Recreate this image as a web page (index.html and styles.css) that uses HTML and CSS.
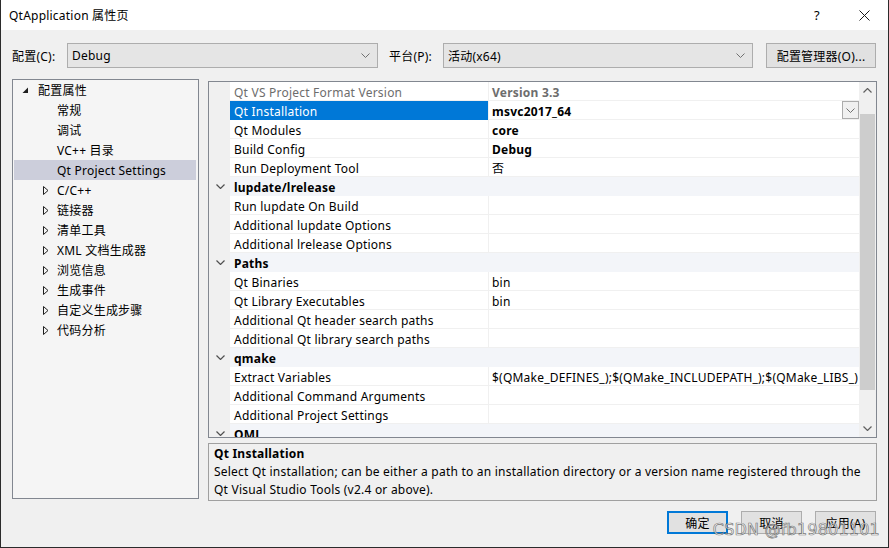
FILE: index.html
```html
<!DOCTYPE html>
<html lang="zh-CN">
<head>
<meta charset="utf-8">
<title>QtApplication 属性页</title>
<link rel="stylesheet" href="styles.css">
</head>
<body>
<div class="window">
  <div class="titlebar">
    <span class="title">QtApplication 属性页</span>
    <span class="tb-help">?</span>
    <span class="tb-close"><svg width="11" height="11" viewBox="0 0 11 11"><path d="M0.5 0.5 L10.5 10.5 M10.5 0.5 L0.5 10.5" stroke="#1a1a1a" stroke-width="1" fill="none"/></svg></span>
  </div>
  <div class="content">
    <div class="config-row">
      <span class="lbl lbl-config">配置(C):</span>
      <div class="combo combo-config"><span>Debug</span><svg class="chev" width="9" height="5" viewBox="0 0 9 5"><path d="M0.5 0.5 L4.5 4.5 L8.5 0.5" stroke="#707070" fill="none"/></svg></div>
      <span class="lbl lbl-platform">平台(P):</span>
      <div class="combo combo-platform"><span>活动(x64)</span><svg class="chev" width="9" height="5" viewBox="0 0 9 5"><path d="M0.5 0.5 L4.5 4.5 L8.5 0.5" stroke="#707070" fill="none"/></svg></div>
      <button class="btn btn-manager">配置管理器(O)...</button>
    </div>
    <div class="main-row">
      <div class="tree">
        <div class="tree-row lvl0"><span class="arrow"><svg width="7" height="7" viewBox="0 0 7 7"><polygon points="6,0.5 6,6 0.5,6" fill="#1e1e1e"/></svg></span><span>配置属性</span></div>
        <div class="tree-row leaf">常规</div>
        <div class="tree-row leaf">调试</div>
        <div class="tree-row leaf">VC++ 目录</div>
        <div class="tree-row leaf selected">Qt Project Settings</div>
        <div class="tree-row lvl1"><span class="arrow"><svg width="6" height="9" viewBox="0 0 6 9"><polygon points="0.5,0.5 5,4.5 0.5,8.5" fill="none" stroke="#1e1e1e"/></svg></span><span>C/C++</span></div>
        <div class="tree-row lvl1"><span class="arrow"><svg width="6" height="9" viewBox="0 0 6 9"><polygon points="0.5,0.5 5,4.5 0.5,8.5" fill="none" stroke="#1e1e1e"/></svg></span><span>链接器</span></div>
        <div class="tree-row lvl1"><span class="arrow"><svg width="6" height="9" viewBox="0 0 6 9"><polygon points="0.5,0.5 5,4.5 0.5,8.5" fill="none" stroke="#1e1e1e"/></svg></span><span>清单工具</span></div>
        <div class="tree-row lvl1"><span class="arrow"><svg width="6" height="9" viewBox="0 0 6 9"><polygon points="0.5,0.5 5,4.5 0.5,8.5" fill="none" stroke="#1e1e1e"/></svg></span><span>XML 文档生成器</span></div>
        <div class="tree-row lvl1"><span class="arrow"><svg width="6" height="9" viewBox="0 0 6 9"><polygon points="0.5,0.5 5,4.5 0.5,8.5" fill="none" stroke="#1e1e1e"/></svg></span><span>浏览信息</span></div>
        <div class="tree-row lvl1"><span class="arrow"><svg width="6" height="9" viewBox="0 0 6 9"><polygon points="0.5,0.5 5,4.5 0.5,8.5" fill="none" stroke="#1e1e1e"/></svg></span><span>生成事件</span></div>
        <div class="tree-row lvl1"><span class="arrow"><svg width="6" height="9" viewBox="0 0 6 9"><polygon points="0.5,0.5 5,4.5 0.5,8.5" fill="none" stroke="#1e1e1e"/></svg></span><span>自定义生成步骤</span></div>
        <div class="tree-row lvl1"><span class="arrow"><svg width="6" height="9" viewBox="0 0 6 9"><polygon points="0.5,0.5 5,4.5 0.5,8.5" fill="none" stroke="#1e1e1e"/></svg></span><span>代码分析</span></div>
      </div>
      <div class="right-col">
        <div class="grid">
          <div class="rows">
            <div class="prow readonly"><span class="gut"></span><span class="pname">Qt VS Project Format Version</span><span class="pval bold">Version 3.3</span></div>
            <div class="prow"><span class="gut"></span><span class="pname sel">Qt Installation</span><span class="pval bold">msvc2017_64<span class="dd"><svg width="9" height="5" viewBox="0 0 9 5"><path d="M0.5 0.5 L4.5 4.5 L8.5 0.5" stroke="#707070" fill="none"/></svg></span></span></div>
            <div class="prow"><span class="gut"></span><span class="pname">Qt Modules</span><span class="pval bold">core</span></div>
            <div class="prow"><span class="gut"></span><span class="pname">Build Config</span><span class="pval bold">Debug</span></div>
            <div class="prow"><span class="gut"></span><span class="pname">Run Deployment Tool</span><span class="pval">否</span></div>
            <div class="prow cat"><span class="gut"><svg width="9" height="5" viewBox="0 0 9 5"><path d="M0.5 0.5 L4.5 4.5 L8.5 0.5" stroke="#505050" stroke-width="1.2" fill="none"/></svg></span><span class="cname">lupdate/lrelease</span></div>
            <div class="prow"><span class="gut"></span><span class="pname">Run lupdate On Build</span><span class="pval"></span></div>
            <div class="prow"><span class="gut"></span><span class="pname">Additional lupdate Options</span><span class="pval"></span></div>
            <div class="prow"><span class="gut"></span><span class="pname">Additional lrelease Options</span><span class="pval"></span></div>
            <div class="prow cat"><span class="gut"><svg width="9" height="5" viewBox="0 0 9 5"><path d="M0.5 0.5 L4.5 4.5 L8.5 0.5" stroke="#505050" stroke-width="1.2" fill="none"/></svg></span><span class="cname">Paths</span></div>
            <div class="prow"><span class="gut"></span><span class="pname">Qt Binaries</span><span class="pval">bin</span></div>
            <div class="prow"><span class="gut"></span><span class="pname">Qt Library Executables</span><span class="pval">bin</span></div>
            <div class="prow"><span class="gut"></span><span class="pname">Additional Qt header search paths</span><span class="pval"></span></div>
            <div class="prow"><span class="gut"></span><span class="pname">Additional Qt library search paths</span><span class="pval"></span></div>
            <div class="prow cat"><span class="gut"><svg width="9" height="5" viewBox="0 0 9 5"><path d="M0.5 0.5 L4.5 4.5 L8.5 0.5" stroke="#505050" stroke-width="1.2" fill="none"/></svg></span><span class="cname">qmake</span></div>
            <div class="prow"><span class="gut"></span><span class="pname">Extract Variables</span><span class="pval">$(QMake_DEFINES_);$(QMake_INCLUDEPATH_);$(QMake_LIBS_)</span></div>
            <div class="prow"><span class="gut"></span><span class="pname">Additional Command Arguments</span><span class="pval"></span></div>
            <div class="prow"><span class="gut"></span><span class="pname">Additional Project Settings</span><span class="pval"></span></div>
            <div class="prow cat"><span class="gut"><svg width="9" height="5" viewBox="0 0 9 5"><path d="M0.5 0.5 L4.5 4.5 L8.5 0.5" stroke="#505050" stroke-width="1.2" fill="none"/></svg></span><span class="cname">QML</span></div>
          </div>
          <div class="scrollbar">
            <div class="sb-btn"><svg width="9" height="5" viewBox="0 0 9 5"><path d="M0.5 4.5 L4.5 0.5 L8.5 4.5" stroke="#606060" stroke-width="1.2" fill="none"/></svg></div>
            <div class="sb-track"><div class="sb-thumb"></div></div>
            <div class="sb-btn"><svg width="9" height="5" viewBox="0 0 9 5"><path d="M0.5 0.5 L4.5 4.5 L8.5 0.5" stroke="#606060" stroke-width="1.2" fill="none"/></svg></div>
          </div>
        </div>
        <div class="desc">
          <div class="desc-title">Qt Installation</div>
          <div class="desc-text">Select Qt installation; can be either a path to an installation directory or a version name registered through the Qt Visual Studio Tools (v2.4 or above).</div>
        </div>
      </div>
    </div>
    <div class="button-row">
      <button class="btn btn-ok">确定</button>
      <button class="btn">取消</button>
      <button class="btn">应用(A)</button>
      <span class="watermark">CSDN @fb19801101</span>
    </div>
  </div>
</div>
</body>
</html>
```
FILE: styles.css
```css
* { box-sizing: border-box; }
html, body { margin: 0; padding: 0; }
body {
  width: 889px;
  height: 548px;
  overflow: hidden;
  background: #f0f0f0;
  font-family: "Noto Sans", "Noto Sans CJK SC", sans-serif;
  font-size: 12px;
  letter-spacing: 0.22px;
  color: #000;
}
.window {
  width: 889px;
  height: 548px;
  border: 1px solid #2b2b2b;
  border-top: none;
  background: #f0f0f0;
  display: flex;
  flex-direction: column;
}
.titlebar {
  height: 30px;
  background: #fff;
  display: flex;
  align-items: center;
  padding-left: 8px;
  flex: none;
}
.title { flex: 1; font-size: 12px; }
.tb-help { width: 10px; margin-right: 35px; font-size: 13px; }
.tb-close { width: 11px; margin-right: 18px; display: flex; }

.content {
  flex: 1;
  display: flex;
  flex-direction: column;
  padding: 13px 11px 0 11px;
}
.config-row {
  display: flex;
  align-items: center;
  height: 25px;
}
.lbl { white-space: nowrap; }
.lbl-config { width: 55px; }
.lbl-platform { width: 54px; margin-left: 11px; }
.combo {
  height: 25px;
  background: #e5e5e5;
  border: 1px solid #adadad;
  display: flex;
  align-items: center;
  padding: 0 7px 0 4px;
  justify-content: space-between;
}
.combo-config { width: 311px; }
.combo-platform { width: 310px; }
.btn {
  font-family: inherit;
  font-size: 12px;
  letter-spacing: inherit;
  color: #000;
  background: #e1e1e1;
  border: 1px solid #adadad;
  height: 23px;
  padding: 0;
}
.btn-manager { width: 110px; height: 25px; margin-left: 13px; }

.main-row {
  display: flex;
  margin-top: 11px;
  height: 422px;
}
.tree {
  width: 187px;
  height: 420px;
  background: #f5f5f5;
  border: 1px solid #828790;
  flex: none;
}
.tree-row {
  height: 20px;
  display: flex;
  align-items: center;
  white-space: nowrap;
  margin: 0 2px 0 1px;
}
.tree-row .arrow { display: flex; align-items: center; width: 16px; }
.lvl0 { padding-left: 8px; }
.lvl1 { padding-left: 29px; }
.lvl1 .arrow { width: 14px; }
.leaf { padding-left: 43px; }
.tree-row.selected { background: #cccedb; }

.right-col {
  margin-left: 9px;
  width: 669px;
  display: flex;
  flex-direction: column;
}
.grid {
  margin-top: 2px;
  height: 357px;
  border: 1px solid #828790;
  background: #fff;
  display: flex;
}
.rows {
  width: 650px;
  height: 355px;
  overflow: hidden;
}
.prow {
  display: flex;
  height: 19px;
}
.prow > span {
  height: 19px;
}
.gut {
  width: 21px;
  flex: none;
  background: #f0f0f0;
  display: flex;
  align-items: center;
  justify-content: center;
  padding-left: 2px;
}
.pname, .pval, .cname {
  padding-top: 3px;
  line-height: 15px;
}
.pname {
  width: 258px;
  flex: none;
  padding-left: 4px;
  border-bottom: 1px solid #f0f0f0;
  white-space: nowrap;
  overflow: hidden;
}
.pname.sel { background: #0078d7; color: #fff; border-bottom-color: #0078d7; }
.pval {
  flex: 1;
  border-left: 1px solid #f0f0f0;
  border-bottom: 1px solid #f0f0f0;
  padding-left: 3px;
  white-space: nowrap;
  overflow: hidden;
  position: relative;
}
.bold { font-weight: bold; }
.readonly .pname, .readonly .pval { color: #6d6d6d; }
.dd {
  position: absolute;
  right: 0;
  top: 0;
  width: 17px;
  height: 18px;
  background: #f0f0f0;
  border: 1px solid #acacac;
  display: flex;
  align-items: center;
  justify-content: center;
}
.cat .cname {
  flex: 1;
  background: #f3f5f9;
  padding-left: 4px;
  font-weight: bold;
}
.scrollbar {
  width: 17px;
  background: #f0f0f0;
  display: flex;
  flex-direction: column;
}
.sb-btn {
  height: 17px;
  display: flex;
  align-items: center;
  justify-content: center;
}
.sb-track { flex: 1; }
.sb-thumb {
  margin: 15px 1px 0 1px;
  height: 276px;
  background: #cdcdcd;
}
.desc {
  margin-top: 5px;
  height: 58px;
  border: 1px solid #a0a0a0;
  padding: 1px 5px;
  line-height: 18px;
}
.desc-title { font-weight: bold; }

.button-row {
  display: flex;
  justify-content: flex-end;
  gap: 13px;
  margin-top: 10px;
  padding-right: 1px;
  position: relative;
}
.button-row .btn { width: 61px; }
.btn-ok { border: 2px solid #0078d7; }
.watermark {
  position: absolute;
  right: -3px;
  top: 9px;
  font-family: "DejaVu Sans", sans-serif;
  font-size: 16px;
  color: rgba(255, 255, 255, 0.7);
  -webkit-text-stroke: 0.7px rgba(80, 80, 80, 0.75);
  letter-spacing: 0.2px;
  white-space: nowrap;
  pointer-events: none;
}
```
